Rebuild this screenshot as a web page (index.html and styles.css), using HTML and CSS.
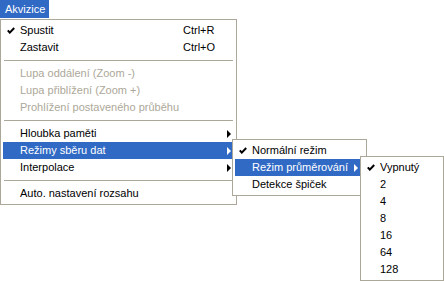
FILE: index.html
```html
<!DOCTYPE html>
<html>
    <head>
        <title>Akvizice</title>
        <meta name="viewport" content="width=device-width, initial-scale=1">
        <link rel="stylesheet" href="styles.css">
    </head>
    <body>
        <div class="menubar">
            <span class="menubar-item active">Akvizice</span>
        </div>

        <div class="menu main-menu">
            <div class="row">
                <span class="check"><svg width="8" height="7" viewBox="0 0 8 7"><path d="M0.8 3.3 L2.8 5.6 L7.2 1" fill="none" stroke="currentColor" stroke-width="2"/></svg></span>
                <span class="label">Spustit</span>
                <span class="shortcut">Ctrl+R</span>
                <span class="arrow"></span>
            </div>
            <div class="row">
                <span class="check"></span>
                <span class="label">Zastavit</span>
                <span class="shortcut">Ctrl+O</span>
                <span class="arrow"></span>
            </div>
            <div class="sep"></div>
            <div class="row disabled">
                <span class="check"></span>
                <span class="label">Lupa oddálení (Zoom -)</span>
            </div>
            <div class="row disabled">
                <span class="check"></span>
                <span class="label">Lupa přiblížení (Zoom +)</span>
            </div>
            <div class="row disabled">
                <span class="check"></span>
                <span class="label">Prohlížení postaveného průběhu</span>
            </div>
            <div class="sep"></div>
            <div class="row">
                <span class="check"></span>
                <span class="label">Hloubka paměti</span>
                <span class="shortcut"></span>
                <span class="arrow"><i class="tri"></i></span>
            </div>
            <div class="row selected">
                <span class="check"></span>
                <span class="label">Režimy sběru dat</span>
                <span class="shortcut"></span>
                <span class="arrow"><i class="tri"></i></span>
            </div>
            <div class="row">
                <span class="check"></span>
                <span class="label">Interpolace</span>
                <span class="shortcut"></span>
                <span class="arrow"><i class="tri"></i></span>
            </div>
            <div class="sep"></div>
            <div class="row">
                <span class="check"></span>
                <span class="label">Auto. nastavení rozsahu</span>
            </div>
        </div>

        <div class="menu sub-modes">
            <div class="row">
                <span class="check"><svg width="8" height="7" viewBox="0 0 8 7"><path d="M0.8 3.3 L2.8 5.6 L7.2 1" fill="none" stroke="currentColor" stroke-width="2"/></svg></span>
                <span class="label">Normální režim</span>
            </div>
            <div class="row selected">
                <span class="check"></span>
                <span class="label">Režim průměrování</span>
                <span class="arrow"><i class="tri"></i></span>
            </div>
            <div class="row">
                <span class="check"></span>
                <span class="label">Detekce špiček</span>
            </div>
        </div>

        <div class="menu sub-avg">
            <div class="row">
                <span class="check"><svg width="8" height="7" viewBox="0 0 8 7"><path d="M0.8 3.3 L2.8 5.6 L7.2 1" fill="none" stroke="currentColor" stroke-width="2"/></svg></span>
                <span class="label">Vypnutý</span>
            </div>
            <div class="row"><span class="check"></span><span class="label">2</span></div>
            <div class="row"><span class="check"></span><span class="label">4</span></div>
            <div class="row"><span class="check"></span><span class="label">8</span></div>
            <div class="row"><span class="check"></span><span class="label">16</span></div>
            <div class="row"><span class="check"></span><span class="label">64</span></div>
            <div class="row"><span class="check"></span><span class="label">128</span></div>
        </div>
    </body>
</html>
```

FILE: styles.css
```css
body{
    margin: 0;
    background-color: #ffffff;
    font-family: "Liberation Sans", Arial, sans-serif;
    font-size: 11px;
    color: #000000;
}
.menubar{
    display: flex;
    height: 19px;
}
.menubar-item{
    width: 49px;
    height: 18px;
    line-height: 18px;
    padding-left: 5px;
    box-sizing: border-box;
}
.menubar-item.active{
    background-color: #316ac5;
    color: #ffffff;
}

/* popup menus */
.menu{
    position: absolute;
    box-sizing: border-box;
    background-color: #ffffff;
    border: 1px solid #aca899;
    padding: 2px;
}
.main-menu{
    left: 0;
    top: 19px;
    width: 237px;
    height: 186px;
}
.sub-modes{
    left: 232px;
    top: 139px;
    width: 135px;
    height: 57px;
}
.sub-avg{
    left: 360px;
    top: 156px;
    width: 84px;
    height: 125px;
}

.row{
    display: flex;
    align-items: center;
    height: 17px;
    line-height: 17px;
    white-space: nowrap;
}
.row.selected{
    background-color: #316ac5;
    color: #ffffff;
}
.row.disabled{
    color: #aca899;
}
.check{
    width: 17px;
    flex: none;
    display: flex;
    align-items: center;
    padding-left: 4px;
    box-sizing: border-box;
}
.check svg{
    display: block;
}
.label{
    flex: 1;
}
.main-menu .shortcut{
    width: 40px;
}
.arrow{
    width: 11px;
    flex: none;
    display: flex;
    align-items: center;
    padding-left: 4px;
    box-sizing: border-box;
}
.sub-modes .arrow{
    padding-left: 1px;
}
.tri{
    display: block;
    width: 0;
    height: 0;
    border-top: 4px solid transparent;
    border-bottom: 4px solid transparent;
    border-left: 4px solid currentColor;
}
.sep{
    height: 9px;
    display: flex;
    align-items: center;
    padding: 0 1px;
}
.sep::before{
    content: "";
    flex: 1;
    height: 1px;
    background-color: #aca899;
}
```
